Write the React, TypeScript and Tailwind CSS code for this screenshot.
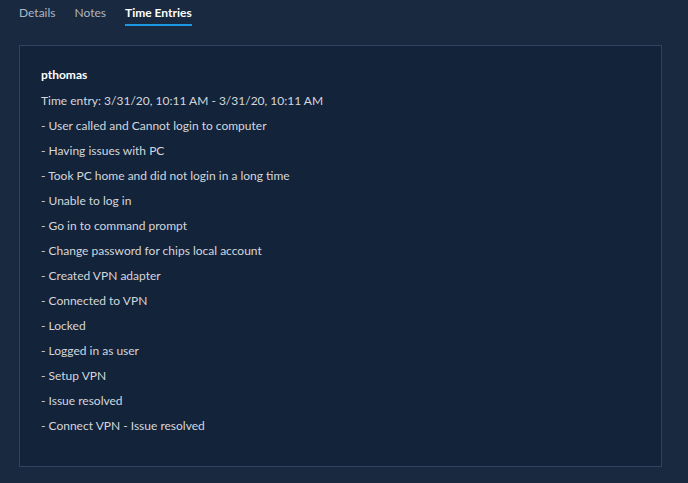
const lines = [
  "- User called and Cannot login to computer",
  "- Having issues with PC",
  "- Took PC home and did not login in a long time",
  "- Unable to log in",
  "- Go in to command prompt",
  "- Change password for chips local account",
  "- Created VPN adapter",
  "- Connected to VPN",
  "- Locked",
  "- Logged in as user",
  "- Setup VPN",
  "- Issue resolved",
  "- Connect VPN - Issue resolved",
]

export default function App() {
  return (
    <div className="h-[483px] w-[688px] overflow-hidden bg-[#19293f] font-['Lato',sans-serif] text-[12px] leading-[17px]">
      <nav className="flex gap-[19px] px-[19px] pt-[5px] leading-[16px]">
        <span className="text-[#aeb6c2]">Details</span>
        <span className="text-[#aeb6c2]">Notes</span>
        <span className="border-b-2 border-[#1d97e0] pb-[3px] font-bold text-white">
          Time Entries
        </span>
      </nav>
      <div className="ml-[19px] mt-[19px] h-[422px] w-[643px] border border-[#2c4462] bg-[#13233a] px-[21px] pt-[20px] text-[#d3d7dc]">
        <p className="font-bold text-white">pthomas</p>
        <p className="mt-[9px]">Time entry: 3/31/20, 10:11 AM - 3/31/20, 10:11 AM</p>
        {lines.map((l) => (
          <p key={l} className="mt-[8px]">
            {l}
          </p>
        ))}
      </div>
    </div>
  )
}
